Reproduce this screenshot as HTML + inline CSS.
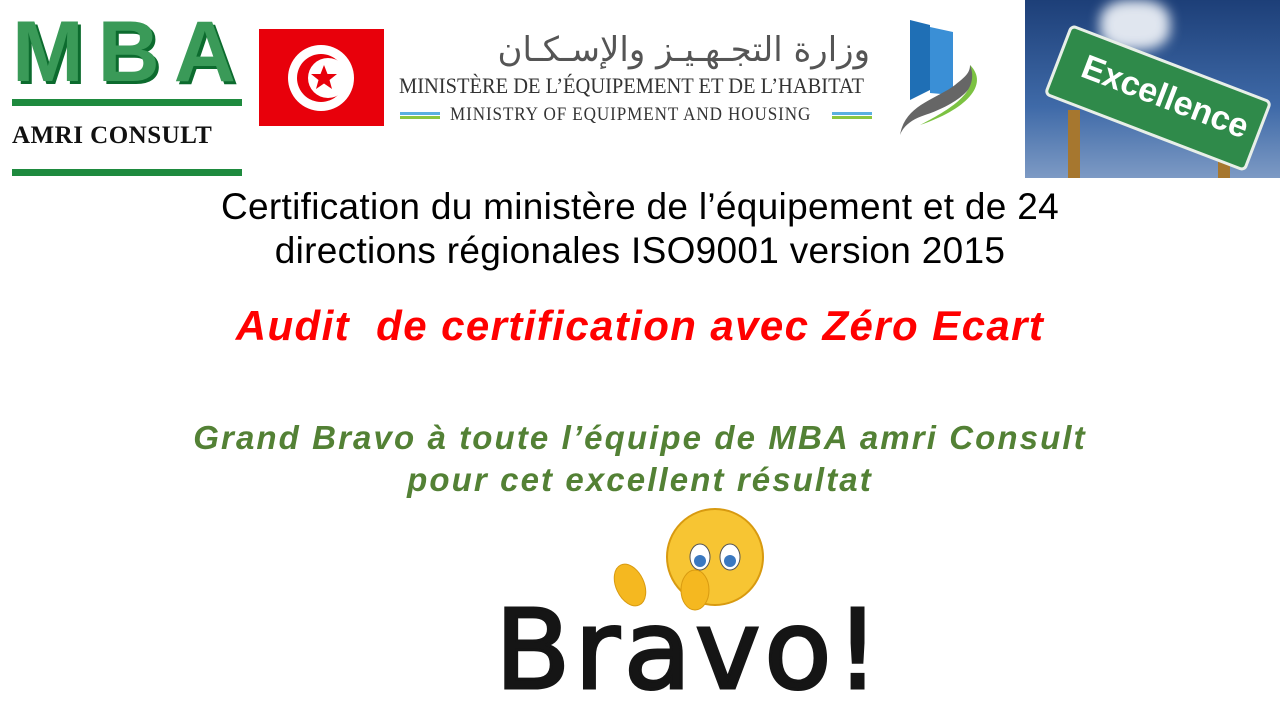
<!DOCTYPE html>
<html><head><meta charset="utf-8"><style>
body{margin:0;width:1280px;height:720px;background:#fff;position:relative;overflow:hidden;font-family:"Liberation Sans",sans-serif}
.a{position:absolute}
.c{text-align:center;width:1280px;left:0}
</style></head><body>
<div class="a" style="left:12px;top:12px;font:900 86px 'Liberation Sans';color:#3a9a58;letter-spacing:14px;line-height:80px;text-shadow:3px 3px 0 #0c6b2e">MBA</div>
<div class="a" style="left:12px;top:99px;width:230px;height:7px;background:#1e8a3e"></div>
<div class="a" style="left:12px;top:122px;font:bold 25px 'Liberation Serif';color:#111;letter-spacing:0.5px">AMRI CONSULT</div>
<div class="a" style="left:12px;top:169px;width:230px;height:7px;background:#1e8a3e"></div>
<div class="a" style="left:259px;top:29px;width:125px;height:97px;background:#e8000b"></div>
<svg class="a" style="left:286px;top:43px" width="70" height="70" viewBox="0 0 70 70"><circle cx="35" cy="35" r="33" fill="#fff"/><circle cx="35" cy="35" r="24" fill="#e8000b"/><circle cx="42" cy="35" r="20" fill="#fff"/><polygon fill="#e8000b" points="38,22 41.5,31 51,31 43.5,37 46,46 38,40.5 30,46 32.5,37 25,31 34.5,31"/></svg>
<div class="a" style="left:400px;top:30px;width:470px;text-align:right;font:34px 'DejaVu Sans',sans-serif;color:#555;line-height:40px">وزارة التجـهـيـز والإسـكـان</div>
<div class="a" style="left:399px;top:73px;font:22px 'Liberation Serif';color:#333;transform:scaleX(0.93);transform-origin:left">MINISTÈRE DE L’ÉQUIPEMENT ET DE L’HABITAT</div>
<div class="a" style="left:400px;top:112px;width:40px;height:3px;background:#5bb0e0"></div>
<div class="a" style="left:400px;top:116px;width:40px;height:3px;background:#8cc63f"></div>
<div class="a" style="left:450px;top:104px;font:19px 'Liberation Serif';color:#333;transform:scaleX(0.9);transform-origin:left;letter-spacing:1px">MINISTRY OF EQUIPMENT AND HOUSING</div>
<div class="a" style="left:832px;top:112px;width:40px;height:3px;background:#5bb0e0"></div>
<div class="a" style="left:832px;top:116px;width:40px;height:3px;background:#8cc63f"></div>
<svg class="a" style="left:895px;top:15px" width="100" height="125" viewBox="0 0 100 125"><polygon points="15,5 35,10 35,75 15,85" fill="#1f6fb5"/><polygon points="35,12 58,17 58,80 35,78" fill="#3a8fd6"/><path d="M5,120 C10,90 40,85 60,70 C70,62 75,58 75,50 C90,70 60,90 30,100 C15,105 8,112 5,120Z" fill="#666"/><path d="M75,50 C95,70 70,95 25,110 C60,92 85,75 75,50Z" fill="#7cc242"/></svg>
<div class="a" style="left:1025px;top:0;width:255px;height:178px;background:linear-gradient(180deg,#1d3f78,#3f6aa8 60%,#7d9ac4)"></div>
<div class="a" style="left:1100px;top:0;width:70px;height:50px;background:#e0e6ef;border-radius:40%;filter:blur(6px)"></div>
<div class="a" style="left:1068px;top:110px;width:12px;height:68px;background:#a6772f"></div>
<div class="a" style="left:1218px;top:140px;width:12px;height:38px;background:#a6772f"></div>
<div class="a" style="left:1050px;top:60px;width:210px;height:70px;background:#2f8a4a;border:3px solid #e8efe8;border-radius:6px;transform:rotate(21deg);transform-origin:center"></div>
<div class="a" style="left:1065px;top:78px;font:bold 34px 'Liberation Sans';color:#fff;transform:rotate(21deg);width:200px;text-align:center">Excellence</div>
<div class="a c" style="top:185px;font:37px 'Liberation Sans';color:#000;line-height:44px;letter-spacing:0.3px">Certification du ministère de l’équipement et de 24<br>directions régionales ISO9001 version 2015</div>
<div class="a c" style="top:302px;font:italic bold 42px 'Liberation Sans';color:#f00;letter-spacing:1.4px">Audit &nbsp;de certification avec Zéro Ecart</div>
<div class="a c" style="top:417px;font:italic bold 33px 'Liberation Sans';color:#538135;line-height:42px;letter-spacing:2.1px">Grand Bravo à toute l’équipe de MBA amri Consult<br>pour cet excellent résultat</div>
<svg class="a" style="left:600px;top:505px" width="180" height="110" viewBox="0 0 180 110"><circle cx="115" cy="52" r="48" fill="#f7c533" stroke="#d89a10" stroke-width="2"/><ellipse cx="100" cy="52" rx="10" ry="13" fill="#fff" stroke="#555"/><ellipse cx="130" cy="52" rx="10" ry="13" fill="#fff" stroke="#555"/><circle cx="100" cy="56" r="6" fill="#3a78c0"/><circle cx="130" cy="56" r="6" fill="#3a78c0"/><ellipse cx="95" cy="85" rx="14" ry="20" fill="#f5b820" stroke="#d89a10"/><ellipse cx="30" cy="80" rx="14" ry="22" fill="#f5b820" stroke="#d89a10" transform="rotate(-25 30 80)"/></svg>
<div class="a" style="left:495px;top:590px;font:110px 'DejaVu Sans',sans-serif;color:#151515;line-height:120px;letter-spacing:4px;-webkit-text-stroke:3px #151515">Bravo!</div>
</body></html>
